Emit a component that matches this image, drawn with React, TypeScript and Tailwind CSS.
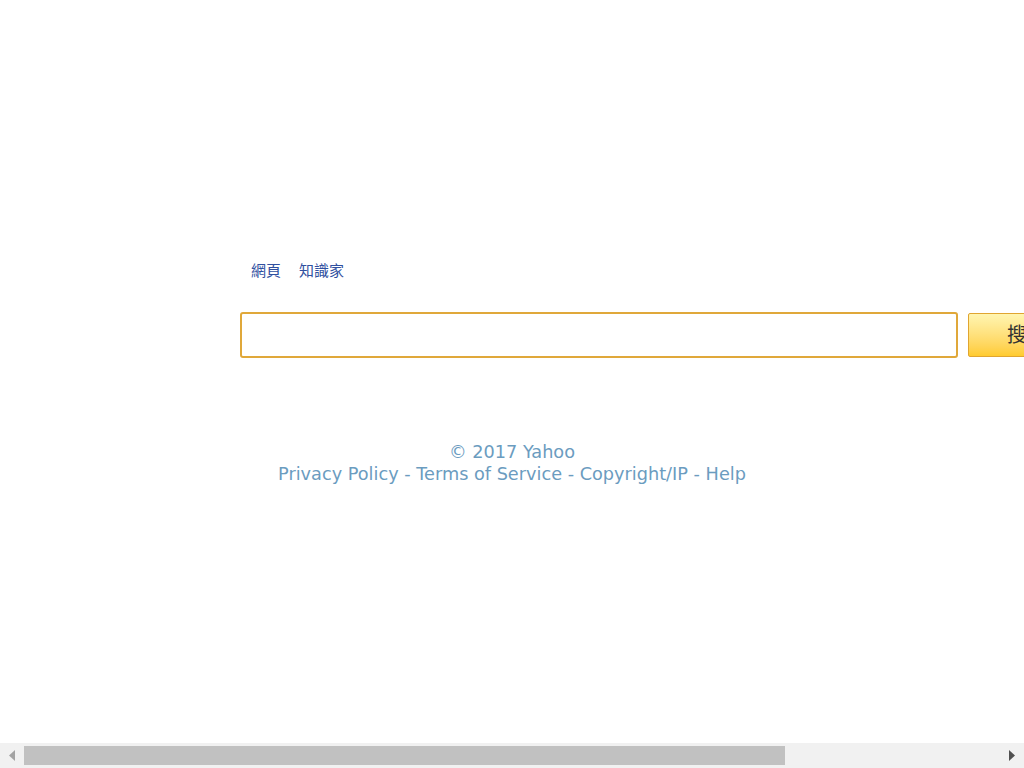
import React from 'react';

const font = { fontFamily: '"DejaVu Sans", "Noto Sans CJK TC", sans-serif' };

const App: React.FC = () => {
  return (
    <div className="relative w-[1024px] h-[768px] overflow-hidden bg-white" style={font}>
      <div className="pt-[260px] pl-[240px]">
        <div className="flex gap-[18px] pl-[11px] text-[15px] leading-[22px] text-[#3050a0]">
          <a href="#">網頁</a>
          <a href="#">知識家</a>
        </div>
        <div className="mt-[30px] flex items-center w-[1073px]">
          <input
            type="text"
            className="w-[718px] h-[46px] shrink-0 border-2 border-[#e0a83a] rounded-[3px] outline-none px-2"
          />
          <button className="ml-[10px] h-[44px] w-[120px] shrink-0 border border-[#e0a530] rounded-[2px] bg-gradient-to-b from-[#fff5b0] to-[#ffcb2e] text-[20px] text-[#333] text-left pl-[38px]">
            搜尋
          </button>
        </div>
      </div>
      <div className="mt-[83px] text-center text-[17.7px] leading-[22px] text-[#6b9cbf]">
        <div>© 2017 Yahoo</div>
        <div>
          <a href="#">Privacy Policy</a> - <a href="#">Terms of Service</a> -{' '}
          <a href="#">Copyright/IP</a> - <a href="#">Help</a>
        </div>
      </div>

      {/* horizontal scrollbar as in the capture */}
      <div className="absolute left-0 right-0 bottom-0 h-[25px] bg-[#f1f1f1] flex items-center">
        <div className="w-[24px] flex justify-center">
          <svg width="8" height="11" viewBox="0 0 8 11">
            <path d="M7 0 L1 5.5 L7 11 Z" fill="#a3a3a3" />
          </svg>
        </div>
        <div className="w-[761px] h-[19px] bg-[#c1c1c1]" />
        <div className="flex-1" />
        <div className="w-[24px] flex justify-center">
          <svg width="8" height="11" viewBox="0 0 8 11">
            <path d="M1 0 L7 5.5 L1 11 Z" fill="#505050" />
          </svg>
        </div>
      </div>
    </div>
  );
};

export default App;
